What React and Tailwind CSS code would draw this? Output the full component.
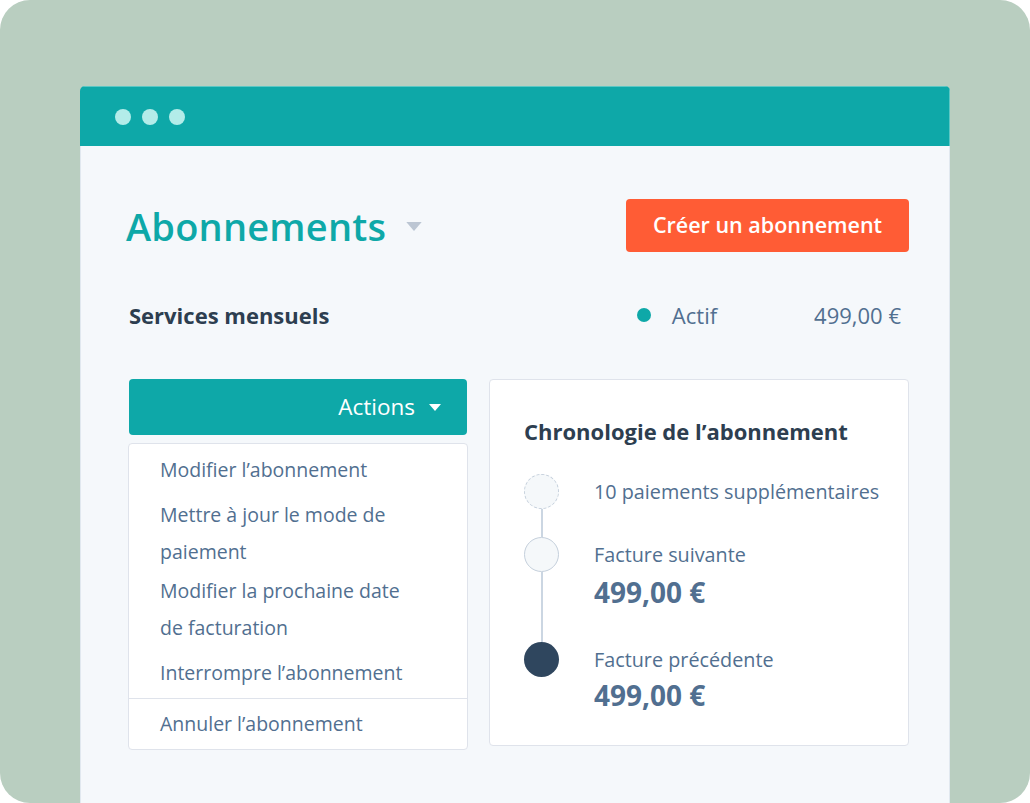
import React from "react";

const FONT = { fontFamily: "'Open Sans', Lato, sans-serif" };

const menuItems = [
  { label: ["Modifier l’abonnement"], cls: "mt-[7px]" },
  { label: ["Mettre à jour le mode de", "paiement"], cls: "mt-[8px]" },
  { label: ["Modifier la prochaine date", "de facturation"], cls: "mt-[2px]" },
  { label: ["Interrompre l’abonnement"], cls: "mt-[8px]" },
];

const Caret = ({ className }) => (
  <svg viewBox="0 0 12 7" className={className}>
    <path d="M0 0h12L6 7z" fill="currentColor" />
  </svg>
);

const App = () => {
  return (
    <div className="w-[1030px] h-[803px] bg-white" style={FONT}>
      <div className="h-full rounded-[30px] bg-[#b9cec0] pt-[86px] px-[80px] overflow-hidden">
        <div className="h-full rounded-t-[5px] overflow-hidden flex flex-col">
          {/* window bar */}
          <div className="h-[60px] bg-[#0ea8a8] border-t border-r border-[#5cc7c4] flex items-center pl-[35px] gap-[11px] shrink-0">
            <span className="w-4 h-4 rounded-full bg-[#b3ece9]" />
            <span className="w-4 h-4 rounded-full bg-[#b3ece9]" />
            <span className="w-4 h-4 rounded-full bg-[#b3ece9]" />
          </div>

          <div className="flex-1 bg-[#f5f8fb] border-x border-[#e1e8ef] pl-[45px] pr-[40px]">
            {/* title row */}
            <div className="mt-[53px] h-[53px] flex items-center justify-between">
              <div className="flex items-center gap-[19px]">
                <h1 className="text-[38px] leading-none font-semibold text-[#0ea8a8] tracking-[0.2px]">Abonnements</h1>
                <Caret className="w-[18px] h-[9px] text-[#bcc6d3] mt-[2px]" />
              </div>
              <button className="h-[53px] w-[283px] rounded-[4px] bg-[#ff5c35] text-white text-[21.5px] font-semibold">
                Créer un abonnement
              </button>
            </div>

            {/* subscription row */}
            <div className="mt-[48px] h-[30px] flex items-center justify-between pl-[3px] pr-[8px]">
              <span className="text-[22px] font-bold text-[#2d3e50]">Services mensuels</span>
              <div className="flex items-center">
                <span className="w-[14px] h-[14px] rounded-full bg-[#0ea8a8]" />
                <span className="ml-[21px] text-[22px] text-[#516f90]">Actif</span>
                <span className="ml-[97px] text-[22px] text-[#516f90]">499,00 €</span>
              </div>
            </div>

            {/* panels */}
            <div className="mt-[49px] flex gap-[22px] pl-[3px]">
              <div className="w-[338px] shrink-0">
                <button className="w-full h-[56px] rounded-[4px] bg-[#0ea8a8] text-white flex items-center justify-end pr-[26px] gap-[14px]">
                  <span className="text-[22.5px] font-medium">Actions</span>
                  <Caret className="w-[12px] h-[7px]" />
                </button>
                <div className="mt-[8px] -ml-px w-[340px] bg-white border border-[#dfe3eb] rounded-[4px] pb-[7px]">
                  <div className="pl-[31px]">
                    {menuItems.map((it) => (
                      <div key={it.label[0]} className={`${it.cls} text-[19.5px] leading-[37px] text-[#516f90]`}>
                        {it.label.map((l) => (
                          <div key={l}>{l}</div>
                        ))}
                      </div>
                    ))}
                  </div>
                  <div className="mt-[7px] border-t border-[#dfe3eb]" />
                  <div className="mt-[6px] pl-[31px] text-[19.5px] leading-[37px] text-[#516f90]">
                    Annuler l’abonnement
                  </div>
                </div>
              </div>

              <div className="w-[421px] h-[367px] bg-white border border-[#dfe3eb] rounded-[4px] pt-[36px] pl-[34px]">
                <h2 className="text-[22px] leading-[30px] font-bold text-[#2d3e50]">Chronologie de l’abonnement</h2>

                <div className="mt-[28px]">
                  <div className="h-[63px] flex">
                    <div className="w-[35px] flex flex-col items-center">
                      <span className="w-[35px] h-[35px] rounded-full border border-dashed border-[#c5d0dc] bg-[#f5f8fa] shrink-0" />
                      <span className="flex-1 w-[2px] bg-[#cbd6e2]" />
                    </div>
                    <div className="ml-[35px] text-[19.8px] leading-[35px] text-[#516f90] whitespace-nowrap">10 paiements supplémentaires</div>
                  </div>

                  <div className="h-[105px] flex">
                    <div className="w-[35px] flex flex-col items-center">
                      <span className="w-[35px] h-[35px] rounded-full border border-[#c5d0dc] bg-[#f5f8fa] shrink-0" />
                      <span className="flex-1 w-[2px] bg-[#cbd6e2]" />
                    </div>
                    <div className="ml-[35px] text-[#516f90]">
                      <div className="text-[19.8px] leading-[35px]">Facture suivante</div>
                      <div className="mt-[5px] text-[28px] leading-[30px] font-bold">499,00 €</div>
                    </div>
                  </div>

                  <div className="flex">
                    <div className="w-[35px] flex flex-col items-center">
                      <span className="w-[35px] h-[35px] rounded-full bg-[#2f465e] shrink-0" />
                    </div>
                    <div className="ml-[35px] text-[#516f90]">
                      <div className="text-[19.8px] leading-[35px]">Facture précédente</div>
                      <div className="mt-[3px] text-[28px] leading-[30px] font-bold">499,00 €</div>
                    </div>
                  </div>
                </div>
              </div>
            </div>
          </div>
        </div>
      </div>
    </div>
  );
};

export default App;
